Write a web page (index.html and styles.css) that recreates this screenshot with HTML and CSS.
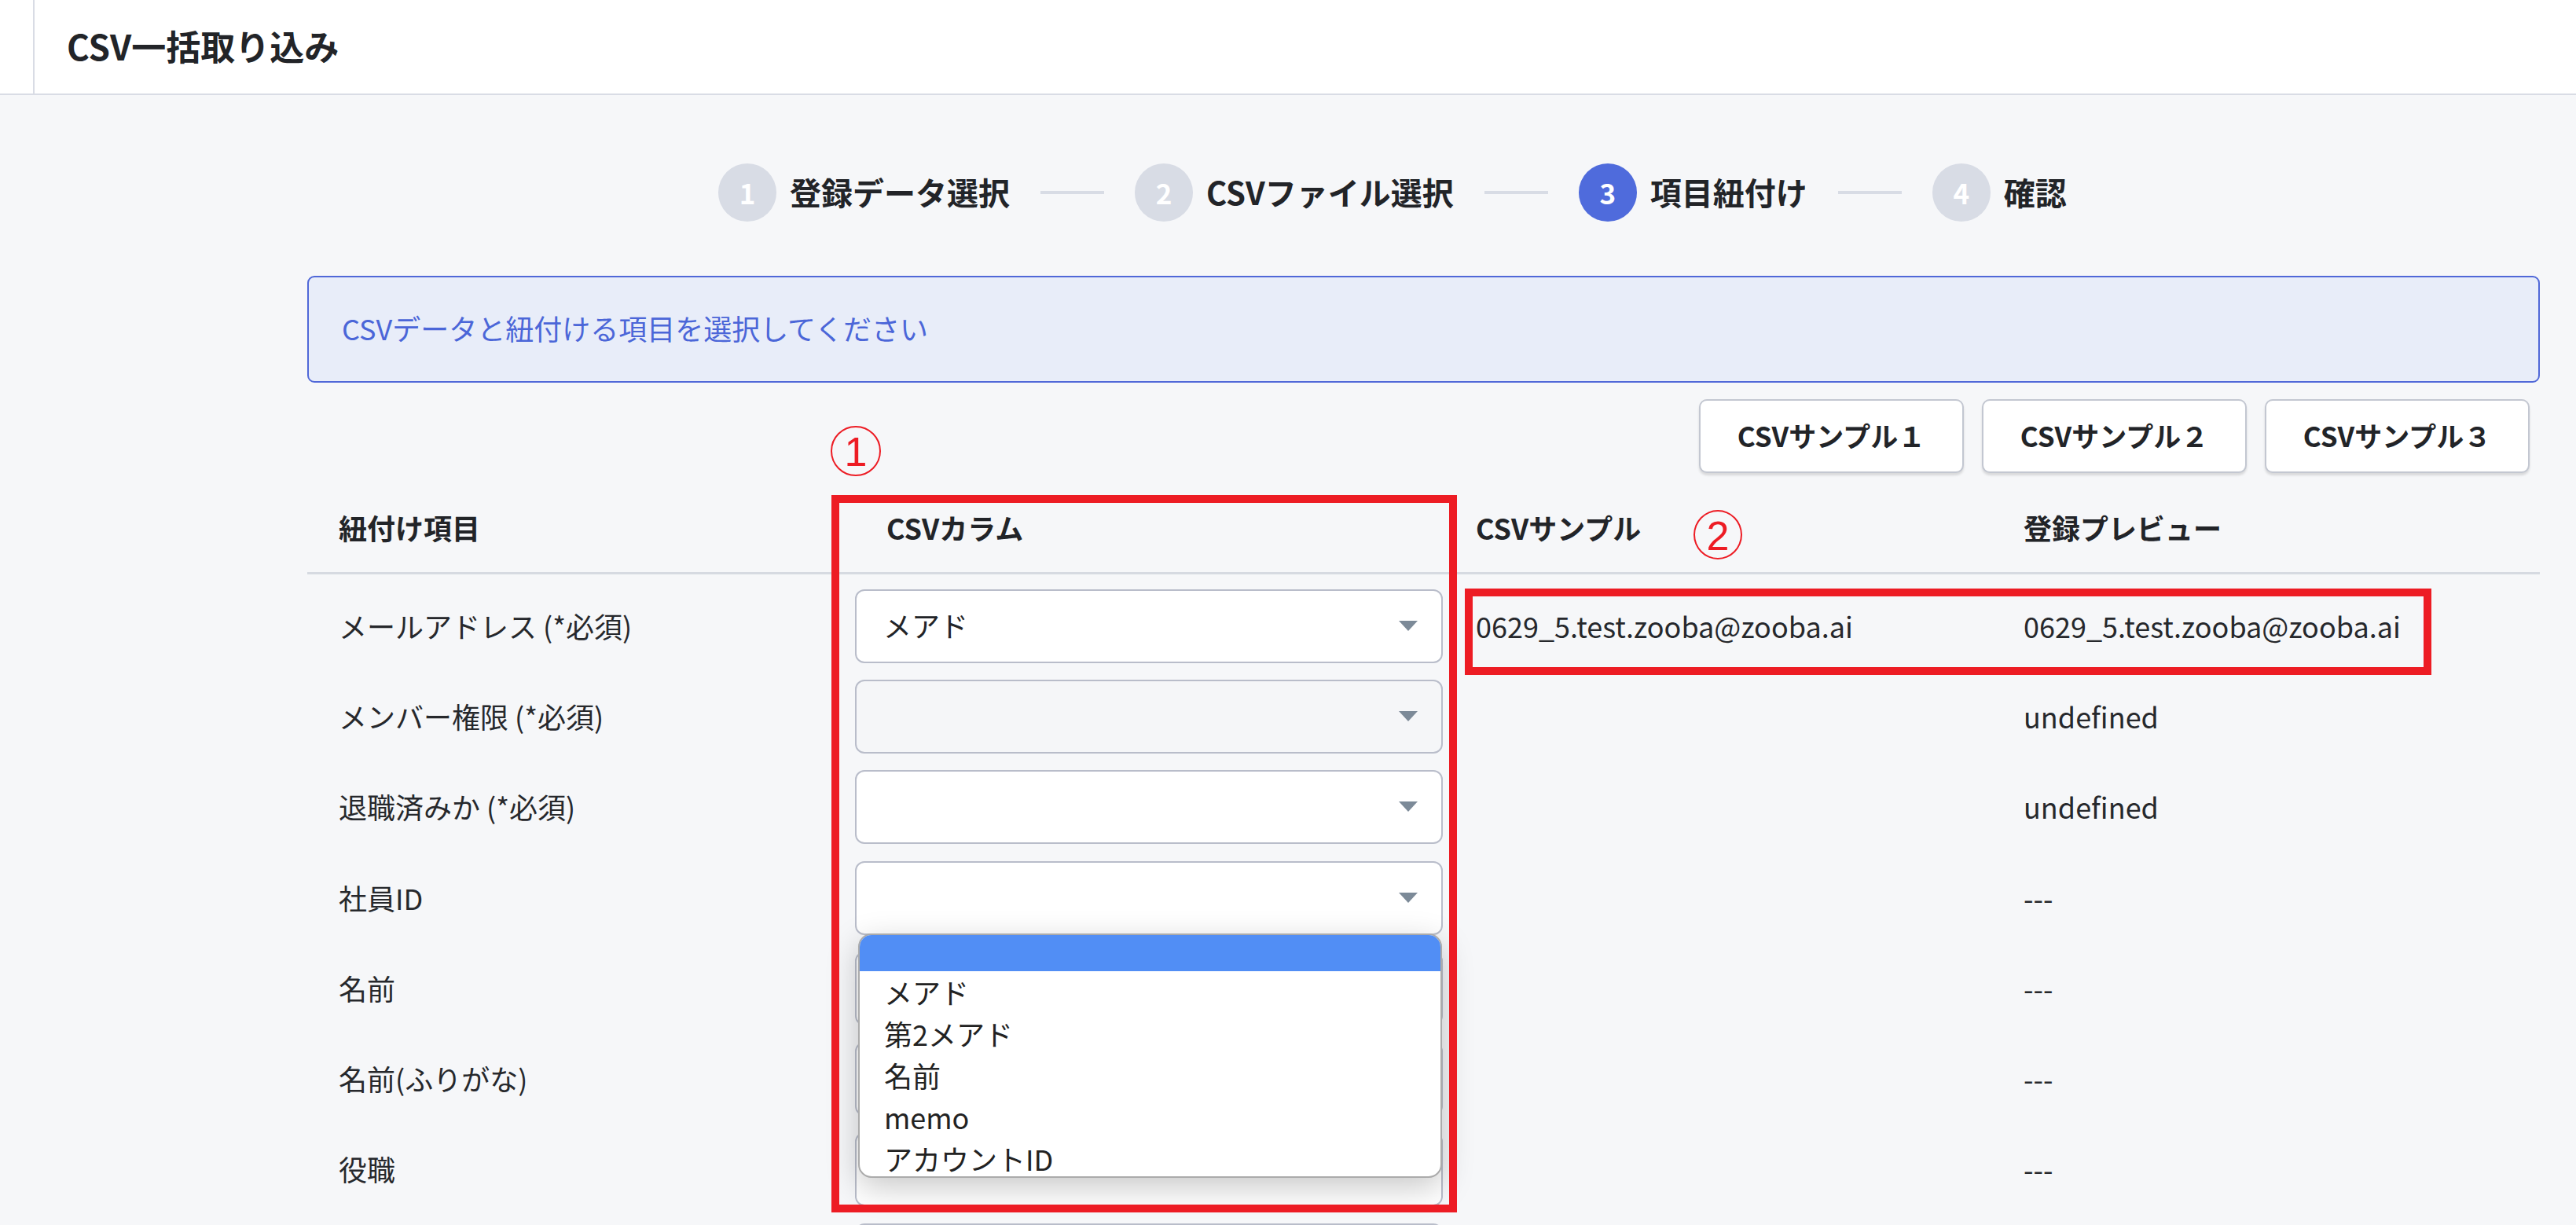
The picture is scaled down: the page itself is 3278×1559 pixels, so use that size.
FILE: index.html
```html
<!DOCTYPE html>
<html lang="ja">
<head>
<meta charset="utf-8">
<title>CSV一括取り込み</title>
<link rel="stylesheet" href="styles.css">
</head>
<body>
<div class="page">
  <header class="topbar">
    <div class="topbar-side"></div>
    <h1 class="topbar-title">CSV一括取り込み</h1>
  </header>

  <main class="main">
    <div class="steps">
      <div class="step"><span class="step-num">1</span><span class="step-label">登録データ選択</span></div>
      <span class="step-line"></span>
      <div class="step"><span class="step-num">2</span><span class="step-label">CSVファイル選択</span></div>
      <span class="step-line"></span>
      <div class="step step-active"><span class="step-num">3</span><span class="step-label">項目紐付け</span></div>
      <span class="step-line"></span>
      <div class="step"><span class="step-num">4</span><span class="step-label">確認</span></div>
    </div>

    <div class="info">CSVデータと紐付ける項目を選択してください</div>

    <div class="sample-buttons">
      <button class="btn">CSVサンプル１</button>
      <button class="btn">CSVサンプル２</button>
      <button class="btn">CSVサンプル３</button>
    </div>

    <div class="table">
      <div class="thead">
        <div class="th">紐付け項目</div>
        <div class="th">CSVカラム</div>
        <div class="th">CSVサンプル</div>
        <div class="th">登録プレビュー</div>
      </div>
      <div class="tbody">
        <div class="tr">
          <div class="td">メールアドレス (*必須)</div>
          <div class="td td-select"><div class="select">メアド<span class="caret"></span></div></div>
          <div class="td">0629_5.test.zooba@zooba.ai</div>
          <div class="td">0629_5.test.zooba@zooba.ai</div>
        </div>
        <div class="tr">
          <div class="td">メンバー権限 (*必須)</div>
          <div class="td td-select"><div class="select select-muted"><span class="caret"></span></div></div>
          <div class="td"></div>
          <div class="td">undefined</div>
        </div>
        <div class="tr">
          <div class="td">退職済みか (*必須)</div>
          <div class="td td-select"><div class="select"><span class="caret"></span></div></div>
          <div class="td"></div>
          <div class="td">undefined</div>
        </div>
        <div class="tr">
          <div class="td">社員ID</div>
          <div class="td td-select"><div class="select"><span class="caret"></span></div></div>
          <div class="td"></div>
          <div class="td">---</div>
        </div>
        <div class="tr">
          <div class="td">名前</div>
          <div class="td td-select"><div class="select"><span class="caret"></span></div></div>
          <div class="td"></div>
          <div class="td">---</div>
        </div>
        <div class="tr">
          <div class="td">名前(ふりがな)</div>
          <div class="td td-select"><div class="select"><span class="caret"></span></div></div>
          <div class="td"></div>
          <div class="td">---</div>
        </div>
        <div class="tr">
          <div class="td">役職</div>
          <div class="td td-select"><div class="select"><span class="caret"></span></div></div>
          <div class="td"></div>
          <div class="td">---</div>
        </div>
        <div class="tr">
          <div class="td"></div>
          <div class="td td-select"><div class="select"><span class="caret"></span></div></div>
          <div class="td"></div>
          <div class="td"></div>
        </div>
      </div>
    </div>
  </main>

  <div class="dropdown">
    <div class="opt opt-selected"></div>
    <div class="opt">メアド</div>
    <div class="opt">第2メアド</div>
    <div class="opt">名前</div>
    <div class="opt">memo</div>
    <div class="opt">アカウントID</div>
  </div>

  <div class="mark mark-box1"></div>
  <div class="mark mark-box2"></div>
  <div class="mark-num mark-num1">1</div>
  <div class="mark-num mark-num2">2</div>
</div>
</body>
</html>
```

FILE: styles.css
```css
* { box-sizing: border-box; }

html, body {
  margin: 0;
  padding: 0;
  width: 3278px;
  height: 1559px;
  overflow: hidden;
  background: #f6f7f9;
  font-family: "Noto Sans CJK JP", "Noto Sans", sans-serif;
  color: #26282c;
}

.page {
  position: relative;
  width: 3278px;
  height: 1559px;
  overflow: hidden;
}

.topbar {
  display: flex;
  align-items: stretch;
  height: 121px;
  background: #ffffff;
  border-bottom: 2px solid #d9dce5;
}

.topbar-side {
  width: 44px;
  border-right: 2px solid #d9dce5;
}

.topbar-title {
  margin: 0;
  padding-left: 41px;
  display: flex;
  align-items: center;
  font-size: 44px;
  font-weight: 700;
  color: #222428;
  padding-bottom: 4px;
}

.main {
  padding: 86px 46px 0 391px;
}

.steps {
  display: flex;
  align-items: center;
  margin-left: 523px;
  height: 75px;
}

.step {
  display: flex;
  align-items: center;
  gap: 17px;
}

.step-num {
  width: 74px;
  height: 74px;
  border-radius: 50%;
  background: #d8dce5;
  color: #ffffff;
  font-size: 35px;
  font-weight: 700;
  display: flex;
  align-items: center;
  justify-content: center;
}

.step-active .step-num {
  background: #4f6bdc;
}

.step-label {
  font-size: 40px;
  font-weight: 700;
  color: #222428;
  line-height: 1;
  padding-bottom: 2px;
}

.step-line {
  width: 81px;
  height: 4px;
  background: #d8dce5;
  margin: 0 39px 0 39px;
}

.info {
  margin-top: 69px;
  height: 136px;
  border: 2px solid #5068d8;
  border-radius: 9px;
  background: #e8edf9;
  color: #4b66d8;
  font-size: 36px;
  display: flex;
  align-items: center;
  padding-left: 42px;
  padding-bottom: 4px;
}

.sample-buttons {
  margin-top: 21px;
  display: flex;
  justify-content: flex-end;
  gap: 23px;
  padding-right: 13px;
}

.btn {
  width: 337px;
  height: 94px;
  background: #ffffff;
  border: 2px solid #c3c7d1;
  border-radius: 10px;
  box-shadow: 0 3px 3px rgba(0, 0, 0, 0.12);
  font-family: inherit;
  font-size: 35px;
  font-weight: 700;
  color: #222428;
  padding: 0 0 4px 0;
}

.table {
  margin-top: 16px;
}

.thead,
.tr {
  display: grid;
  grid-template-columns: 697px 750px 697px 697px;
}

.thead {
  height: 113px;
  border-bottom: 3px solid #d6dae1;
  align-items: center;
}

.th {
  padding-left: 40px;
  font-size: 36px;
  font-weight: 700;
  color: #222428;
  padding-bottom: 4px;
}

.tbody {
  padding-top: 8px;
}

.tr {
  height: 115.3px;
  align-items: center;
}

.td {
  padding-left: 40px;
  font-size: 36px;
  color: #26282c;
  padding-bottom: 2px;
}

.td-select {
  padding: 0 2px 0 0;
}

.select {
  position: relative;
  height: 94px;
  background: #ffffff;
  border: 2px solid #b9bdca;
  border-radius: 12px;
  display: flex;
  align-items: center;
  padding-left: 34px;
  padding-bottom: 4px;
  font-size: 36px;
  color: #222428;
}

.select-muted {
  background: #f5f6f8;
}

.caret {
  position: absolute;
  right: 30px;
  top: 50%;
  margin-top: -7px;
  width: 0;
  height: 0;
  border-left: 12.5px solid transparent;
  border-right: 12.5px solid transparent;
  border-top: 13px solid #7c8a98;
}

.dropdown {
  position: absolute;
  left: 1092px;
  top: 1188px;
  width: 743px;
  height: 311px;
  background: #ffffff;
  border: 2px solid #ababab;
  border-radius: 17px;
  overflow: hidden;
  box-shadow: 0 12px 40px rgba(0, 0, 0, 0.22);
}

.opt {
  height: 53px;
  display: flex;
  align-items: center;
  padding-left: 31px;
  font-size: 36px;
  color: #222222;
  padding-bottom: 2px;
}

.opt-selected {
  height: 46px;
  background: #518ef5;
}

.mark {
  position: absolute;
  border: 10px solid #ed1c24;
}

.mark-box1 {
  left: 1058px;
  top: 630px;
  width: 796px;
  height: 913px;
}

.mark-box2 {
  left: 1864px;
  top: 749px;
  width: 1230px;
  height: 110px;
}

.mark-num {
  position: absolute;
  width: 64px;
  height: 64px;
  border: 2px solid #ed1c24;
  border-radius: 50%;
  color: #ed1c24;
  font-family: "Liberation Sans", sans-serif;
  font-size: 52px;
  line-height: 1;
  display: flex;
  align-items: center;
  justify-content: center;
  padding-top: 2px;
}

.mark-num1 {
  left: 1057px;
  top: 542px;
}

.mark-num2 {
  left: 2155px;
  top: 649px;
  width: 62px;
  height: 63px;
}
```
